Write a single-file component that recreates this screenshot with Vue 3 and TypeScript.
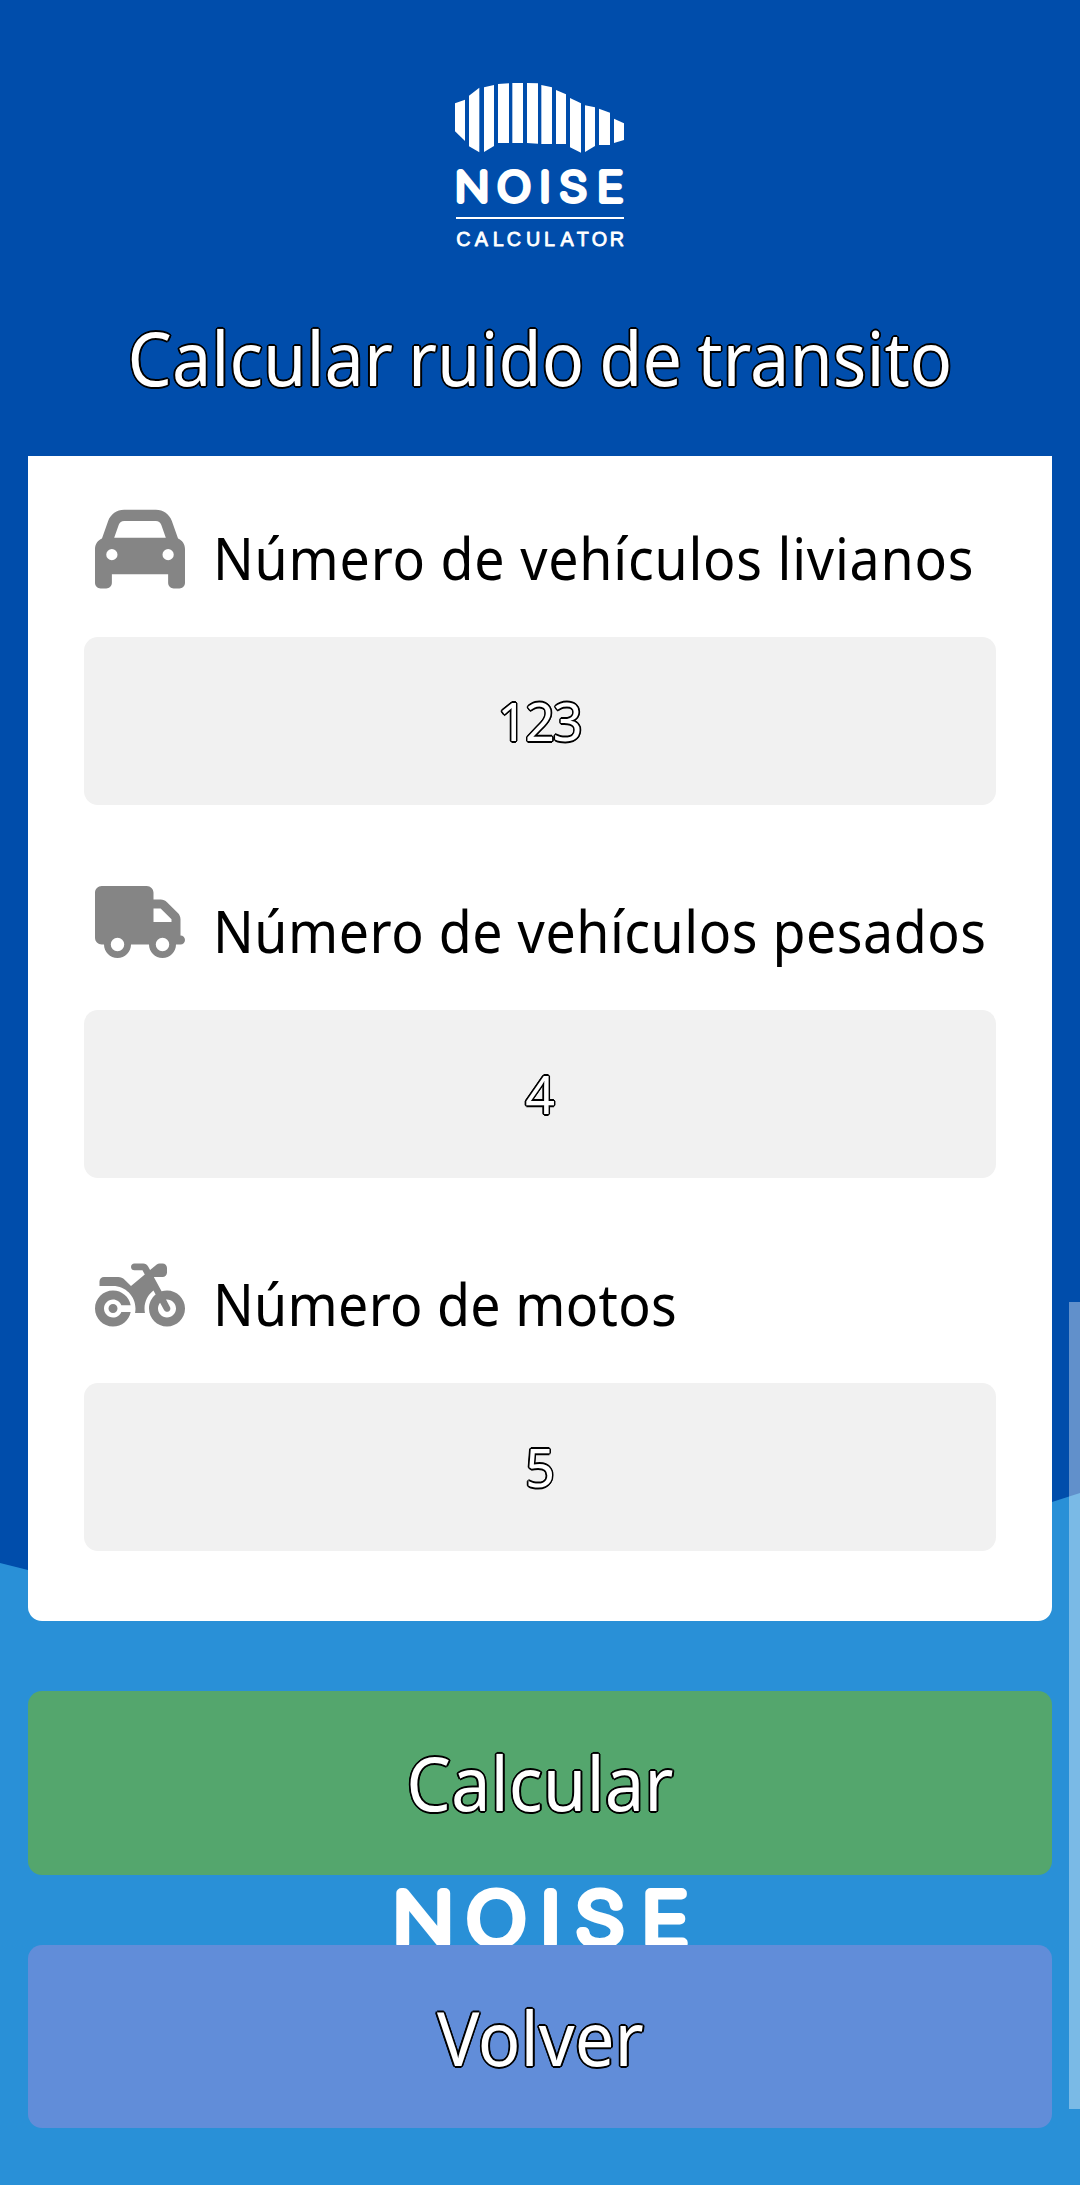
<script setup lang="ts">
import { ref } from 'vue'

interface Field {
  id: string
  label: string
  value: string
  viewBox: string
  path: string
}

const fields = ref<Field[]>([
  {
    id: 'livianos',
    label: 'Número de vehículos livianos',
    value: '123',
    viewBox: '0 0 512 512',
    path: 'M135.2 117.4L109.1 192H402.9l-26.1-74.6C372.3 104.6 360.2 96 346.6 96H165.4c-13.6 0-25.7 8.6-30.2 21.4zM39.6 196.8L74.8 96.3C88.3 57.8 124.6 32 165.4 32H346.6c40.8 0 77.1 25.8 90.6 64.3l35.2 100.5c23.2 9.6 39.6 32.5 39.6 59.2V400v48c0 17.7-14.3 32-32 32H448c-17.7 0-32-14.3-32-32V400H96v48c0 17.7-14.3 32-32 32H32c-17.7 0-32-14.3-32-32V400 256c0-26.7 16.4-49.6 39.6-59.2zM128 288a32 32 0 1 0 -64 0 32 32 0 1 0 64 0zm288 32a32 32 0 1 0 0-64 32 32 0 1 0 0 64z',
  },
  {
    id: 'pesados',
    label: 'Número de vehículos pesados',
    value: '4',
    viewBox: '0 0 640 512',
    path: 'M48 0C21.5 0 0 21.5 0 48V368c0 26.5 21.5 48 48 48H64c0 53 43 96 96 96s96-43 96-96H384c0 53 43 96 96 96s96-43 96-96h32c17.7 0 32-14.3 32-32s-14.3-32-32-32V288 256 237.3c0-17-6.7-33.3-18.7-45.3L512 114.7c-12-12-28.3-18.7-45.3-18.7H416V48c0-26.5-21.5-48-48-48H48zM416 160h50.7L544 237.3V256H416V160zM112 416a48 48 0 1 1 96 0 48 48 0 1 1 -96 0zm368-48a48 48 0 1 1 0 96 48 48 0 1 1 0-96z',
  },
  {
    id: 'motos',
    label: 'Número de motos',
    value: '5',
    viewBox: '0 0 640 512',
    path: 'M280 32c-13.3 0-24 10.7-24 24s10.7 24 24 24h57.7l16.4 30.3L256 192l-45.3-45.3c-12-12-28.3-18.7-45.3-18.7H64c-17.7 0-32 14.3-32 32v32h96c88.4 0 160 71.6 160 160c0 11-1.1 21.7-3.2 32h70.4c-2.1-10.3-3.2-21-3.2-32c0-52.2 25-98.6 63.7-127.8l15.4 28.6C402.4 276.3 384 312 384 352c0 70.7 57.3 128 128 128s128-57.3 128-128s-57.3-128-128-128c-13.5 0-26.5 2.1-38.7 6L418.2 128H480c17.7 0 32-14.3 32-32V64c0-17.7-14.3-32-32-32H459.6c-7.5 0-14.7 2.6-20.5 7.4L391.7 78.9l-14-26c-7-12.9-20.5-21-35.2-21H280zM462.7 311.2l28.2 52.2c6.3 11.7 20.9 16 32.5 9.7s16-20.9 9.7-32.5l-28.2-52.2c2.3-.3 4.7-.4 7.1-.4c35.3 0 64 28.7 64 64s-28.7 64-64 64s-64-28.7-64-64c0-15.5 5.5-29.7 14.7-40.8zM187.3 376c-9.5 23.5-32.5 40-59.3 40c-35.3 0-64-28.7-64-64s28.7-64 64-64c26.9 0 49.9 16.5 59.3 40h66.4C242.5 268.8 190.5 224 128 224C57.3 224 0 281.3 0 352s57.3 128 128 128c62.5 0 114.5-44.8 125.8-104H187.3zM128 384a32 32 0 1 0 0-64 32 32 0 1 0 0 64z',
  },
])

// Vertical stripes that form the car silhouette of the logo
const stripes: string[] = [
  '75,130 105,119 105,243 75,214',
  '117,107 148,83 148,277 117,259',
  '162,82 192,75 192,258 162,276',
  '204,72 237,70 237,249 204,249',
  '247,69 279,69 279,249 247,249',
  '291,69 324,70 324,251 291,249',
  '334,75 366,82 366,252 334,252',
  '378,90 408,103 408,252 378,252',
  '420,114 453,130 453,278 420,262',
  '465,136 495,142 495,258 465,276',
  '507,146 540,158 540,255 507,255',
  '552,176 582,190 582,240 552,249',
]
</script>

<template>
  <div class="screen">
    <svg class="backdrop" viewBox="0 0 1080 2185" aria-hidden="true">
      <path d="M0 1563 L28 1570 C300 1640 760 1600 1052 1502 L1080 1493 V2185 H0 Z" fill="#2990d7" />
      <g transform="translate(540 1943.7) scale(1.12 1)">
        <text class="brand" x="-104.2 -39 9.4 53.6 111.6" y="0" font-size="70" stroke-width="9.9">NOISE</text>
      </g>
    </svg>

    <header class="header">
      <svg class="logo" viewBox="430 60 220 200" role="img" aria-label="Noise Calculator">
        <g transform="translate(430 60) scale(0.33333)" fill="#fff">
          <polygon v-for="s in stripes" :key="s" :points="s" />
        </g>
        <g transform="translate(540 200.6) scale(1.12 1)">
          <text class="brand" x="-60.7 -23.2 4.5 29.7 62.7" y="0" font-size="39.5" stroke-width="5.8">NOISE</text>
        </g>
        <rect x="456" y="217" width="168" height="2" fill="#fff" />
        <text class="subbrand" x="456.2 474.8 492.8 506.8 526.1 544.1 560.4 576.7 591.7 609.8" y="246.3" font-size="19.8">CALCULATOR</text>
      </svg>
      <h1 class="title outlined">Calcular ruido de transito</h1>
    </header>

    <main class="card">
      <section v-for="f in fields" :key="f.id" class="field">
        <label class="label" :for="f.id">
          <span class="icon-box">
            <svg class="icon" :viewBox="f.viewBox"><path :d="f.path" /></svg>
          </span>
          <span class="label-text" :class="f.id">{{ f.label }}</span>
        </label>
        <input :id="f.id" v-model="f.value" class="input" inputmode="numeric" />
      </section>
    </main>

    <button class="button calculate outlined" type="button"><span>Calcular</span></button>
    <button class="button back outlined" type="button"><span>Volver</span></button>

    <div class="scrollbar"></div>
  </div>
</template>

<style>
body {
  margin: 0;
  background: #004dab;
}
</style>

<style scoped>
.screen {
  position: relative;
  box-sizing: border-box;
  width: 1080px;
  height: 2185px;
  padding: 0 28px;
  overflow: hidden;
  background: #004dab;
  font-family: "Noto Sans", "Open Sans", sans-serif;
  display: flex;
  flex-direction: column;
  isolation: isolate;
}

.backdrop {
  position: absolute;
  inset: 0;
  width: 1080px;
  height: 2185px;
  z-index: -1;
}

.brand {
  font-family: Inter, "Liberation Sans", sans-serif;
  font-weight: 100;
  text-anchor: middle;
  fill: #fff;
  stroke: #fff;
  stroke-linejoin: round;
  stroke-linecap: round;
}

.subbrand {
  font-family: "Liberation Sans", Arial, sans-serif;
  fill: #fff;
  stroke: #fff;
  stroke-width: 0.8;
  stroke-linejoin: round;
}

.outlined {
  color: #fff;
  text-shadow:
    2px 0 0 #000, -2px 0 0 #000, 0 2px 0 #000, 0 -2px 0 #000,
    1.4px 1.4px 0 #000, -1.4px 1.4px 0 #000, 1.4px -1.4px 0 #000, -1.4px -1.4px 0 #000;
}

.header {
  box-sizing: border-box;
  height: 456px;
  padding-top: 60px;
  display: flex;
  flex-direction: column;
  align-items: center;
}

.logo {
  width: 220px;
  height: 200px;
  flex: none;
}

.title {
  margin: 48px 0 0;
  font-size: 74px;
  font-weight: 400;
  line-height: 100px;
  word-spacing: -3.2px;
  white-space: nowrap;
  transform: scaleX(0.948);
}

.card {
  box-sizing: border-box;
  height: 1165px;
  padding: 0 56px;
  background: #fff;
  border-radius: 0 0 14px 14px;
}

.field {
  height: 373px;
}

.label {
  display: flex;
  height: 181px;
}

.icon-box {
  display: flex;
  align-items: center;
  width: 90px;
  height: 90px;
  margin: 48px 28px 0 11px;
  flex: none;
}

.icon {
  display: block;
  width: 90px;
  fill: #858585;
}

.label-text {
  height: 80px;
  margin-top: 62px;
  font-size: 58.4px;
  line-height: 80px;
  color: #000;
  white-space: nowrap;
  transform: scaleX(0.92);
  transform-origin: 0 50%;
}

.label-text.livianos {
  letter-spacing: 0.84px;
}

.label-text.pesados {
  letter-spacing: 0.56px;
}

.label-text.motos {
  letter-spacing: 0.3px;
}

.input {
  display: block;
  box-sizing: border-box;
  width: 912px;
  height: 168px;
  padding: 0 2px 1px 0;
  border: 0;
  border-radius: 14px;
  outline: 0;
  background: #f1f1f1;
  color: #fff;
  font-family: inherit;
  font-size: 52px;
  letter-spacing: -2px;
  text-align: center;
  text-shadow:
    1.6px 0 0 #000, -1.6px 0 0 #000, 0 1.6px 0 #000, 0 -1.6px 0 #000,
    1.2px 1.2px 0 #000, -1.2px 1.2px 0 #000, 1.2px -1.2px 0 #000, -1.2px -1.2px 0 #000;
}

.button {
  flex: none;
  height: 184px;
  margin: 70px 0 0;
  padding: 0;
  border: 0;
  border-radius: 14px;
  font-family: inherit;
  font-size: 74px;
  line-height: 100px;
}

.button + .button {
  height: 183px;
  padding-top: 2px;
}

.button span {
  display: inline-block;
  transform: scaleX(0.955);
}

.calculate {
  background: #54a66d;
}

.back {
  background: #618dd9;
}

.scrollbar {
  position: absolute;
  top: 1302px;
  right: 0;
  width: 11px;
  height: 807px;
  background: rgba(255, 255, 255, 0.38);
}
</style>
